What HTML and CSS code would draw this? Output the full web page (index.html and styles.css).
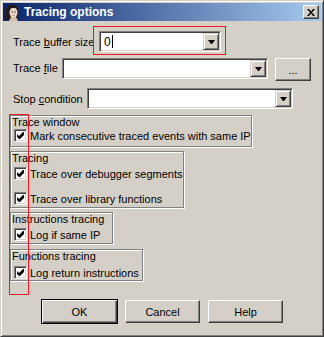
FILE: index.html
```html
<!doctype html>
<html lang="en">
<head>
    <meta charset="UTF-8">
    <title>Tracing options</title>
    <link rel="stylesheet" href="styles.css">
</head>
<body>
    <div class="window">
        <div class="titlebar">
            <svg class="app-icon" width="16" height="17" viewBox="0 0 16 17">
                <path d="M1 16 Q0 6 4 2 Q8 -1 12 2 Q15 5 14 10 L12 16 Z" fill="#2b1d16"/>
                <ellipse cx="9.5" cy="8.5" rx="4" ry="5.2" fill="#ead8c8"/>
                <path d="M5 6 Q8 2 13.5 5 L13 3 Q8 0 4.5 4 Z" fill="#1a120d"/>
                <path d="M7 13 L12 13 L14 17 L5 17 Z" fill="#d9c1b0"/>
                <circle cx="8.2" cy="8" r="0.7" fill="#3a2a20"/>
                <circle cx="11" cy="8" r="0.7" fill="#3a2a20"/>
                <path d="M8.6 11.2 h2" stroke="#a0605a" stroke-width="0.8"/>
            </svg>
            <span class="title">Tracing options</span>
            <div class="close-btn">
                <svg width="8" height="7" viewBox="0 0 8 7">
                    <path d="M0 0h2l2 2.5 2-2.5h2l-3 3.5 3 3.5h-2l-2-2.5-2 2.5h-2l3-3.5z" fill="#000"/>
                </svg>
            </div>
        </div>

        <div class="content">
            <div class="row row-buffer">
                <span class="field-label label-buffer">Trace <u>b</u>uffer size</span>
                <div class="combo combo-buffer">
                    <span class="combo-text">0<span class="caret"></span></span>
                    <div class="drop"><svg width="7" height="4" viewBox="0 0 7 4"><polygon points="0,0 7,0 4,4 3,4" fill="#000"/></svg></div>
                </div>
            </div>

            <div class="row row-file">
                <span class="field-label label-file">Trace <u>f</u>ile</span>
                <div class="combo combo-wide">
                    <span class="combo-text"></span>
                    <div class="drop"><svg width="7" height="4" viewBox="0 0 7 4"><polygon points="0,0 7,0 4,4 3,4" fill="#000"/></svg></div>
                </div>
                <div class="btn btn-browse">...</div>
            </div>

            <div class="row row-stop">
                <span class="field-label label-stop">Stop <u>c</u>ondition</span>
                <div class="combo combo-wide">
                    <span class="combo-text"></span>
                    <div class="drop"><svg width="7" height="4" viewBox="0 0 7 4"><polygon points="0,0 7,0 4,4 3,4" fill="#000"/></svg></div>
                </div>
            </div>

            <div class="group group-window">
                <div class="group-title">Trace window</div>
                <div class="check-row">
                    <span class="check"><svg width="11" height="11" viewBox="1 1 11 11"><polygon points="3,5 5,7 9,3 10,3 10,6 6,10 5,10 3,8" fill="#000"/></svg></span>
                    Mark consecutive traced events with same IP
                </div>
            </div>

            <div class="group group-tracing">
                <div class="group-title">Tracing</div>
                <div class="check-row first">
                    <span class="check"><svg width="11" height="11" viewBox="1 1 11 11"><polygon points="3,5 5,7 9,3 10,3 10,6 6,10 5,10 3,8" fill="#000"/></svg></span>
                    Trace over debugger segments
                </div>
                <div class="check-row second">
                    <span class="check"><svg width="11" height="11" viewBox="1 1 11 11"><polygon points="3,5 5,7 9,3 10,3 10,6 6,10 5,10 3,8" fill="#000"/></svg></span>
                    Trace over library functions
                </div>
            </div>

            <div class="group group-instr">
                <div class="group-title">Instructions tracing</div>
                <div class="check-row first">
                    <span class="check"><svg width="11" height="11" viewBox="1 1 11 11"><polygon points="3,5 5,7 9,3 10,3 10,6 6,10 5,10 3,8" fill="#000"/></svg></span>
                    Log if same IP
                </div>
            </div>

            <div class="group group-func">
                <div class="group-title">Functions tracing</div>
                <div class="check-row first func">
                    <span class="check"><svg width="11" height="11" viewBox="1 1 11 11"><polygon points="3,5 5,7 9,3 10,3 10,6 6,10 5,10 3,8" fill="#000"/></svg></span>
                    Log return instructions
                </div>
            </div>

            <div class="buttons">
                <div class="btn btn-default">OK</div>
                <div class="btn btn-cancel">Cancel</div>
                <div class="btn btn-help">Help</div>
            </div>
        </div>

        <!-- annotation highlights drawn over the dialog -->
        <div class="highlight hl-buffer"></div>
        <div class="highlight hl-checks"></div>
    </div>
</body>
</html>
```

FILE: styles.css
```css
body {
    margin: 0;
    background: #fff;
}
.window {
    position: relative;
    width: 324px;
    height: 337px;
    box-sizing: border-box;
    background: #d4d0c8;
    border: 1px solid;
    border-color: #d4d0c8 #404040 #404040 #d4d0c8;
    box-shadow: inset 1px 1px #fff, inset -1px -1px #808080;
    padding: 2px;
    font-family: "Liberation Sans", Arial, sans-serif;
    font-size: 11px;
    color: #000;
}
.titlebar {
    display: flex;
    align-items: center;
    height: 18px;
    background: linear-gradient(to right, #0a246a, #a6caf0);
}
.app-icon {
    margin-left: 1px;
    flex-shrink: 0;
}
.title {
    margin-left: 4px;
    color: #fff;
    font-weight: bold;
    font-size: 12px;
}
.close-btn {
    margin-left: auto;
    margin-right: 2px;
    width: 16px;
    height: 14px;
    box-sizing: border-box;
    background: #d4d0c8;
    border: 1px solid;
    border-color: #fff #404040 #404040 #fff;
    box-shadow: inset -1px -1px #808080;
    display: flex;
    align-items: center;
    justify-content: center;
}
.content {
    display: flex;
    flex-direction: column;
}
.row {
    display: flex;
    align-items: center;
    height: 21px;
    padding-left: 10px;
}
.row-buffer {
    margin-top: 10px;
}
.row-file {
    margin-top: 6px;
    height: 23px;
    align-items: flex-start;
}
.row-file .field-label {
    line-height: 21px;
}
.row-stop {
    margin-top: 7px;
}
.field-label {
    flex-shrink: 0;
}
.label-buffer { width: 86px; }
.label-file { width: 49px; }
.label-stop { width: 74px; }

.combo {
    display: flex;
    align-items: center;
    height: 21px;
    box-sizing: border-box;
    background: #fff;
    border: 1px solid;
    border-color: #808080 #fff #fff #808080;
    box-shadow: inset 1px 1px #404040, inset -1px -1px #d4d0c8;
    padding: 1px;
}
.combo-buffer { width: 122px; }
.combo-wide { width: 206px; }
.combo-text {
    flex: 1;
    display: flex;
    align-items: center;
    padding-left: 3px;
    font-size: 12px;
}
.caret {
    display: inline-block;
    width: 1px;
    height: 13px;
    margin-left: 1px;
    background: #000;
}
.drop {
    width: 16px;
    height: 17px;
    box-sizing: border-box;
    background: #d4d0c8;
    border: 1px solid;
    border-color: #d4d0c8 #404040 #404040 #d4d0c8;
    box-shadow: inset 1px 1px #fff, inset -1px -1px #808080;
    display: flex;
    align-items: center;
    justify-content: center;
}
.drop svg {
    margin-top: 1px;
}

.btn {
    display: flex;
    align-items: center;
    justify-content: center;
    width: 75px;
    height: 23px;
    box-sizing: border-box;
    background: #d4d0c8;
    border: 1px solid;
    border-color: #fff #404040 #404040 #fff;
    box-shadow: inset -1px -1px #808080;
}
.btn-browse {
    width: 36px;
    margin-left: 7px;
}
.btn-default {
    width: 77px;
    height: 25px;
    border-color: #000;
    box-shadow: inset 1px 1px #fff, inset -1px -1px #404040, inset -2px -2px #808080;
}
.btn-cancel { margin-left: 7px; }
.btn-help { margin-left: 8px; }

.group {
    box-sizing: border-box;
    margin-left: 7px;
    border: 1px solid #808080;
    box-shadow: 1px 1px #fff, inset 1px 1px #fff;
    padding: 0 1px;
}
.group-window {
    margin-top: 6px;
    width: 242px;
    height: 32px;
}
.group-tracing {
    margin-top: 4px;
    width: 174px;
    height: 57px;
}
.group-instr {
    margin-top: 4px;
    width: 103px;
    height: 32px;
}
.group-func {
    margin-top: 5px;
    width: 133px;
    height: 32px;
}
.group-title {
    line-height: 13px;
    height: 13px;
    white-space: nowrap;
}
.check-row {
    display: flex;
    align-items: center;
    height: 13px;
    gap: 3px;
    white-space: nowrap;
}
.check-row.first { margin-top: 2px; }
.check-row.second { margin-top: 12px; }
.check-row.func { margin-top: 3px; }
.check {
    flex-shrink: 0;
    display: flex;
    width: 13px;
    height: 13px;
    margin-left: 2px;
    box-sizing: border-box;
    background: #fff;
    border: 1px solid;
    border-color: #808080 #fff #fff #808080;
    box-shadow: inset 1px 1px #404040, inset -1px -1px #d4d0c8;
}

.buttons {
    display: flex;
    align-items: center;
    justify-content: center;
    margin-top: 18px;
}

.highlight {
    position: absolute;
    border: 1px solid #ed1c24;
    box-sizing: border-box;
}
.hl-buffer {
    left: 92px;
    top: 25px;
    width: 133px;
    height: 29px;
}
.hl-checks {
    left: 8px;
    top: 113px;
    width: 20px;
    height: 181px;
}
```
